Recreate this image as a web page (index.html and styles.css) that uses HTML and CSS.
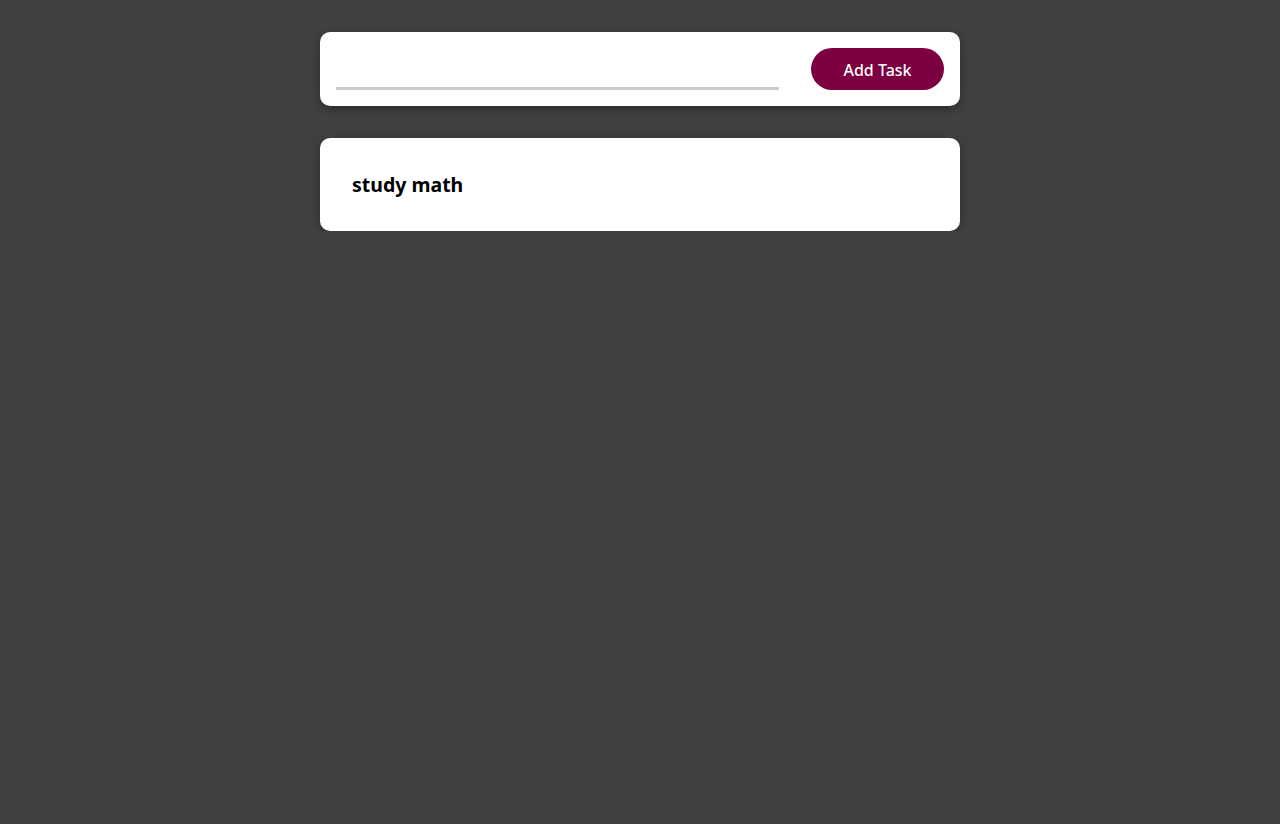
FILE: index.html
```html
<!DOCTYPE html>
<html>
<head>
<meta charset="utf-8">
<link rel="stylesheet" href="styles.css">
</head>
<body>
<main class="app">
  <form class="card add-form">
    <input class="task-input" type="text">
    <button class="add-btn" type="button">Add Task</button>
  </form>
  <section class="card task">
    <h3 class="task-title">study math</h3>
  </section>
</main>
</body>
</html>
```
FILE: styles.css
```css
html, body {
  margin: 0;
  padding: 0;
  background: #404040;
  font-family: "Noto Sans", "Open Sans", sans-serif;
}
.app {
  width: 640px;
  margin: 0 auto;
  padding-top: 32px;
  display: flex;
  flex-direction: column;
  gap: 32px;
}
.card {
  background: #fff;
  border-radius: 10px;
  box-shadow: 0 3px 8px rgba(0,0,0,0.35);
}
.add-form {
  display: flex;
  align-items: flex-end;
  gap: 32px;
  padding: 16px;
  margin: 0;
}
.task-input {
  flex: 1;
  border: none;
  border-bottom: 3px solid #cccccc;
  height: 21px;
  margin-bottom: 0;
  padding: 0;
  outline: none;
  font: inherit;
}
.add-btn {
  width: 133px;
  height: 42px;
  border: none;
  border-radius: 21px;
  background: #7d0040;
  color: #fff;
  font-family: inherit;
  font-size: 16px;
  font-weight: 500;
  padding: 2px 0 0;
}
.task {
  padding: 32px;
  height: 93px;
  box-sizing: border-box;
  display: flex;
  align-items: center;
}
.task-title {
  margin: 0;
  font-size: 19.5px;
  font-weight: 700;
  color: #000;
}
```
